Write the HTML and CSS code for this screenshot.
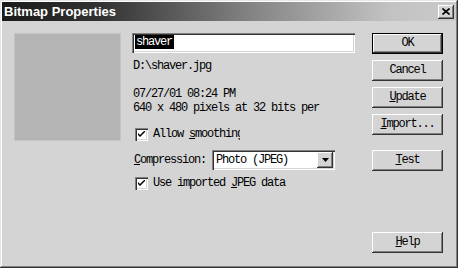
FILE: index.html
```html
<!DOCTYPE html>
<html lang="en">
<head>
    <meta charset="UTF-8">
    <title>Bitmap Properties</title>
    <link rel="stylesheet" href="styles.css">
</head>
<body>
    <div class="window">
        <div class="titlebar">
            <span class="title">Bitmap Properties</span>
            <span class="close-btn">
                <svg width="8" height="7" viewBox="0 0 8 7"><path d="M0.5 0.5 L7.5 6.5 M7.5 0.5 L0.5 6.5" stroke="#000" stroke-width="1.6"/></svg>
            </span>
        </div>
        <div class="dialog">
            <!-- bitmap preview -->
            <div class="preview"></div>

            <div class="info">
                <div class="name-field"><span class="selected">shaver</span></div>
                <div class="line path">D:\shaver.jpg</div>
                <div class="line date">07/27/01 08:24 PM</div>
                <div class="line">640 x 480 pixels at 32 bits per</div>

                <div class="check smoothing">
                    <span class="box"><svg width="7" height="7" viewBox="0 0 7 7"><path d="M0 2 L0 4 L2 6 L7 1 L7 -1 L2 4 Z" fill="#000"/></svg></span>
                    <span class="clip">Allow <u>s</u>moothing</span>
                </div>

                <div class="compression">
                    <span class="label"><u>C</u>ompression:</span>
                    <div class="select">
                        <span class="value">Photo (JPEG)</span>
                        <span class="drop"><svg width="7" height="4" viewBox="0 0 7 4"><path d="M0 0 H7 L3.5 4 Z" fill="#000"/></svg></span>
                    </div>
                </div>

                <div class="check jpeg">
                    <span class="box"><svg width="7" height="7" viewBox="0 0 7 7"><path d="M0 2 L0 4 L2 6 L7 1 L7 -1 L2 4 Z" fill="#000"/></svg></span>
                    <span>Use imported <u>J</u>PEG data</span>
                </div>
            </div>

            <div class="buttons">
                <div class="btn default">OK</div>
                <div class="btn">Cancel</div>
                <div class="btn"><u>U</u>pdate</div>
                <div class="btn"><u>I</u>mport...</div>
                <div class="btn test"><u>T</u>est</div>
                <div class="btn help"><u>H</u>elp</div>
            </div>
        </div>
    </div>
</body>
</html>
```

FILE: styles.css
```css
body {
    margin: 0;
    background: #d4d4d4;
}
.window {
    width: 458px;
    height: 268px;
    box-sizing: border-box;
    padding: 2px;
    background: #d4d4d4;
    box-shadow: inset -1px -1px #333, inset 1px 1px #e6e6e6, inset -2px -2px #808080, inset 2px 2px #fff;
    font-family: "Liberation Mono", monospace;
    font-size: 12px;
    letter-spacing: -1.2px;
    color: #000;
}
.titlebar {
    height: 19px;
    display: flex;
    align-items: center;
    justify-content: space-between;
    padding: 0 2px 0 2px;
    background: linear-gradient(to right, #1a1a1a 0%, #333 22%, #848484 55%, #c2c2c2 85%, #cacaca 100%);
}
.title {
    font-family: "Liberation Sans", Arial, sans-serif;
    font-weight: bold;
    font-size: 13px;
    letter-spacing: 0;
    color: #fff;
}
.close-btn {
    width: 16px;
    height: 14px;
    display: flex;
    align-items: center;
    justify-content: center;
    background: #d4d4d4;
    box-shadow: inset -1px -1px #333, inset 1px 1px #fff, inset -2px -2px #808080;
}
.dialog {
    display: flex;
    padding: 12px 0 0 12px;
}
.preview {
    width: 107px;
    height: 108px;
    box-sizing: border-box;
    border: 1px solid #c4c4c4;
    background: #b4b4b4;
    margin-right: 11px;
}
.info {
    width: 223px;
    margin-right: 17px;
}
.name-field {
    height: 20px;
    box-sizing: border-box;
    padding: 2px 0 0 3px;
    background: #fff;
    box-shadow: inset 1px 1px #808080, inset 2px 2px #333, inset -1px -1px #fff, inset -2px -2px #d4d4d4;
}
.selected {
    display: inline-block;
    height: 14px;
    line-height: 14px;
    padding: 0 2px 0 1px;
    background: #000;
    color: #fff;
}
.line {
    height: 14px;
    line-height: 14px;
    padding-left: 1px;
    white-space: nowrap;
}
.path {
    margin-top: 6px;
}
.date {
    margin-top: 14px;
}
.check {
    display: flex;
    align-items: center;
    height: 14px;
    line-height: 14px;
    padding-left: 3px;
    white-space: nowrap;
}
.check .box {
    width: 13px;
    height: 13px;
    margin-right: 5px;
    display: flex;
    align-items: center;
    justify-content: center;
    background: #fff;
    box-shadow: inset 1px 1px #808080, inset 2px 2px #333, inset -1px -1px #fff, inset -2px -2px #d4d4d4;
}
.smoothing {
    margin-top: 12px;
}
.smoothing .clip {
    width: 87px;
    overflow: hidden;
}
.compression {
    margin-top: 9px;
    height: 20px;
    display: flex;
    align-items: center;
    padding-left: 2px;
    white-space: nowrap;
}
.compression .label {
    width: 78px;
}
.select {
    width: 123px;
    height: 20px;
    box-sizing: border-box;
    padding: 2px;
    display: flex;
    align-items: center;
    justify-content: space-between;
    background: #fff;
    box-shadow: inset 1px 1px #808080, inset 2px 2px #333, inset -1px -1px #fff, inset -2px -2px #d4d4d4;
}
.select .value {
    padding-left: 2px;
}
.drop {
    width: 16px;
    height: 16px;
    display: flex;
    align-items: center;
    justify-content: center;
    background: #d4d4d4;
    box-shadow: inset -1px -1px #333, inset 1px 1px #fff, inset -2px -2px #808080;
}
.jpeg {
    margin-top: 6px;
}
.buttons {
    width: 71px;
    display: flex;
    flex-direction: column;
    gap: 6px;
}
.btn {
    height: 21px;
    line-height: 21px;
    text-align: center;
    background: #d4d4d4;
    box-shadow: inset -1px -1px #333, inset 1px 1px #fff, inset -2px -2px #808080;
}
.btn.default {
    box-shadow: inset 0 0 0 1px #000, inset -2px -2px #333, inset 2px 2px #fff, inset -3px -3px #808080;
}
.btn.test {
    margin-top: 9px;
}
.btn.help {
    margin-top: 55px;
}
```
